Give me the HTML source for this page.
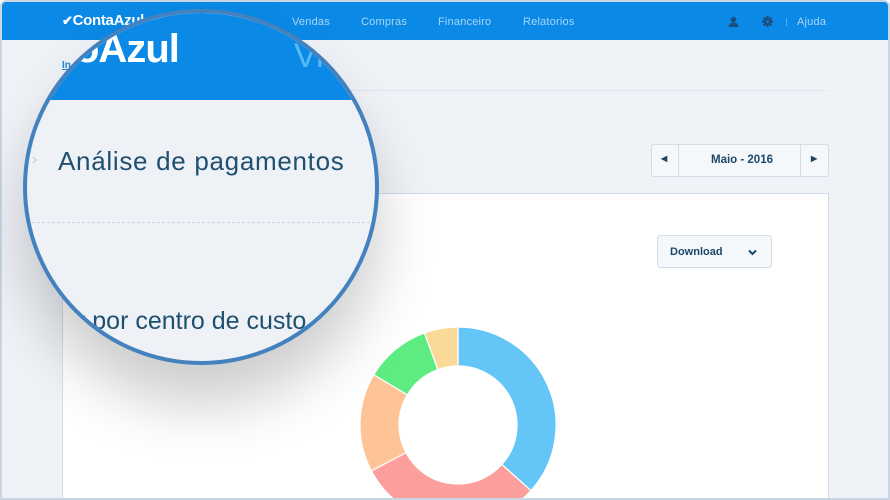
<!DOCTYPE html>
<html><head><meta charset="utf-8"><style>
*{margin:0;padding:0;box-sizing:border-box}
body{width:890px;height:500px;overflow:hidden;background:#fff;font-family:"Liberation Sans",sans-serif;position:relative}
.frame{position:absolute;left:0;top:0;width:890px;height:500px;border:2px solid #c8d6e3;border-radius:6px 6px 0 0;background:#eff2f7;overflow:hidden}
.top{position:absolute;left:0;top:0;width:886px;height:38px;background:#0a8ae6}
.nav{position:absolute;top:14px;font-size:11px;color:#a9d6fb;letter-spacing:.2px}
.abs{position:absolute}
.card{position:absolute;left:60px;top:191px;width:767px;height:320px;background:#fff;border:1px solid #d3dde8}
.btn{position:absolute;background:#f5f8fb;border:1px solid #d3dde8;border-radius:3px;color:#1d4766;font-weight:bold;font-size:11px}
.mag{position:absolute;left:23px;top:9px;width:356px;height:356px;border-radius:50%;overflow:hidden;background:#eef1f6;border:4px solid #4482bf;box-shadow:0 40px 60px rgba(0,0,0,.2)}
.mag .in{position:absolute;left:0;top:0;width:348px;height:348px}
</style></head><body>
<div class="frame">
  <div class="top"></div>
  <div class="abs" style="left:60px;top:10px;color:#fff;font-weight:bold;font-size:15px;letter-spacing:-.3px"><span style="font-size:13px">✔</span>ContaAzul</div>
  <div class="nav" style="left:290px">Vendas</div>
  <div class="nav" style="left:359px">Compras</div>
  <div class="nav" style="left:436px">Financeiro</div>
  <div class="nav" style="left:521px">Relatorios</div>
  <svg class="abs" style="left:726px;top:14px" width="11" height="11" viewBox="0 0 11 11"><circle cx="5.5" cy="3.5" r="2.8" fill="#1d4e80"/><path d="M0.5 11 Q0.5 6.5 5.5 6.5 Q10.5 6.5 10.5 11Z" fill="#1d4e80"/></svg>
  <svg class="abs" style="left:760px;top:14px" width="11" height="11" viewBox="-5.5 -5.5 11 11"><g fill="#1d4e80"><circle r="3.6"/><rect x="-1.2" y="-5.5" width="2.4" height="11"/><rect x="-5.5" y="-1.2" width="11" height="2.4"/><rect x="-1.2" y="-5.5" width="2.4" height="11" transform="rotate(45)"/><rect x="-1.2" y="-5.5" width="2.4" height="11" transform="rotate(-45)"/></g><circle r="1.3" fill="#0a8ae6"/></svg>
  <div class="abs" style="left:784px;top:16px;width:1px;height:8px;background:#5aa6e8"></div>
  <div class="nav" style="left:795px">Ajuda</div>
  <div class="abs" style="left:60px;top:58px;color:#1a8ad8;font-size:10px;font-weight:bold;text-decoration:underline">In</div>
  <div class="abs" style="left:340px;top:88px;width:486px;border-top:1px dotted #d0d8e2"></div>
  <div class="btn" style="left:649px;top:142px;width:178px;height:33px">
    <div class="abs" style="left:26px;top:0;width:1px;height:31px;background:#d3dde8"></div>
    <div class="abs" style="left:148px;top:0;width:1px;height:31px;background:#d3dde8"></div>
    <div class="abs" style="left:9px;top:9px;font-size:8px">◀</div>
    <div class="abs" style="left:59px;top:9px;font-size:11.5px">Maio - 2016</div>
    <div class="abs" style="left:159px;top:9px;font-size:8px">▶</div>
  </div>
  <div class="card">
    <div class="btn" style="left:594px;top:41px;width:115px;height:33px">
      <div class="abs" style="left:12px;top:10px">Download</div>
      <svg class="abs" style="left:90px;top:13px" width="9" height="7" viewBox="0 0 9 7"><path d="M1 1.5 L4.5 5 L8 1.5" stroke="#1d4766" stroke-width="2" fill="none"/></svg>
    </div>
    <svg class="abs" style="left:295px;top:131px" width="200" height="200" viewBox="-100 -100 200 200">
      <g stroke="#fff" stroke-width="1.2">
      <path d="M0 -98 A98 98 0 0 1 72.9 65.6 L43.9 39.5 A59 59 0 0 0 0 -59Z" fill="#64c5f7"/>
      <path d="M72.9 65.6 A98 98 0 0 1 -86.6 45.9 L-52.1 27.6 A59 59 0 0 0 43.9 39.5Z" fill="#fc9e9c"/>
      <path d="M-86.6 45.9 A98 98 0 0 1 -84.2 -50.2 L-50.7 -30.2 A59 59 0 0 0 -52.1 27.6Z" fill="#fec498"/>
      <path d="M-84.2 -50.2 A98 98 0 0 1 -33.5 -92.1 L-20.2 -55.4 A59 59 0 0 0 -50.7 -30.2Z" fill="#5eec82"/>
      <path d="M-33.5 -92.1 A98 98 0 0 1 0 -98 L0 -59 A59 59 0 0 0 -20.2 -55.4Z" fill="#fbd996"/>
      </g>
    </svg>
  </div>
</div>
<div class="mag"><div class="in">
  <div class="abs" style="left:0;top:0;width:348px;height:87px;background:#0a8ae6"></div>
  <div class="abs" style="left:48px;top:14px;color:#fff;font-weight:bold;font-size:40px;letter-spacing:-1px">oAzul</div>
  <div class="abs" style="left:267px;top:24px;color:#59b9f2;font-size:34px">Vis</div>
  <div class="abs" style="left:5px;top:138px;color:#c0c8d2;font-size:16px">›</div>
  <div class="abs" style="left:31px;top:133px;color:#1f5070;font-size:26px;letter-spacing:.7px">Análise de pagamentos</div>
  <div class="abs" style="left:0;top:209px;width:348px;border-top:1px dashed #cfd6df"></div>
  <div class="abs" style="left:50px;top:294px;color:#1f5070;font-size:25px">r por centro de custo</div>
</div></div>
</body></html>
